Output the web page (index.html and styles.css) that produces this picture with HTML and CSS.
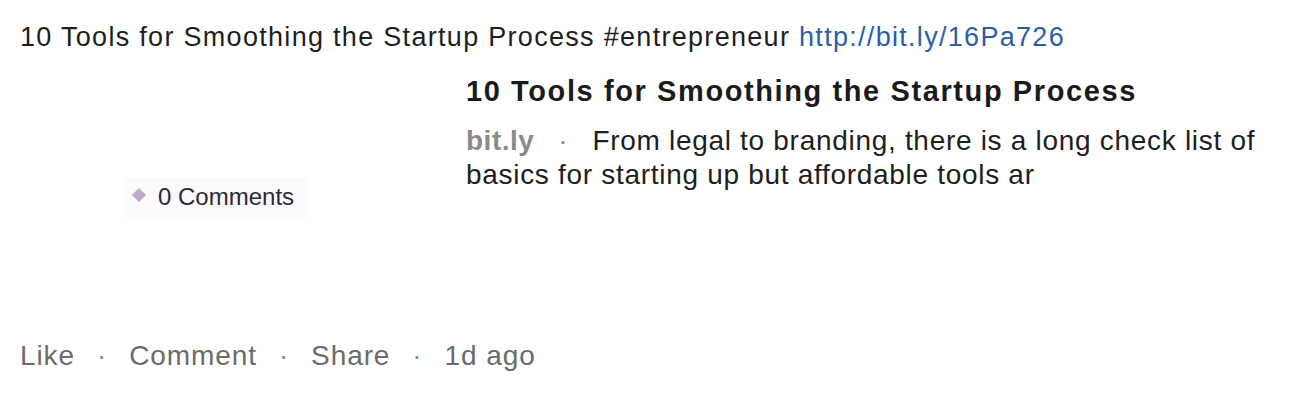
FILE: index.html
```html
<!DOCTYPE html>
<html lang="en">
  <head>
    <meta charset="UTF-8" />
    <title>Post</title>
    <link rel="stylesheet" href="styles.css">
  </head>
  <body>
    <div class="post">
      <p class="post-text">
        10 Tools for Smoothing the Startup Process #entrepreneur
        <a href="#" class="link">http://bit.ly/16Pa726</a>
      </p>
      <div class="share flex-row">
        <div class="thumb">
          <div class="thumb-label">
            <span class="diamond"></span>0 Comments
          </div>
        </div>
        <div class="share-body">
          <h3 class="share-title">10 Tools for Smoothing the Startup Process</h3>
          <p class="share-desc">
            <span class="source">bit.ly</span><span class="dot">·</span>From legal to branding, there is a long check list of basics for starting up but affordable tools ar
          </p>
        </div>
      </div>
      <div class="actions flex-row">
        <span>Like</span><span class="dot">·</span><span>Comment</span><span class="dot">·</span><span>Share</span><span class="dot">·</span><span>1d ago</span>
      </div>
    </div>
  </body>
</html>
```

FILE: styles.css
```css
body {
  margin: 0;
  background-color: #fff;
  font-family: "Liberation Sans", Arial, sans-serif;
  color: #222;
}
.post {
  padding: 19px 20px 0 20px;
}
.flex-row {
  display: flex;
}
.post-text {
  margin: 0;
  font-size: 27px;
  line-height: 36px;
  letter-spacing: 1.3px;
  color: #1e1e1e;
}
.link {
  color: #2b5ea8;
  text-decoration: none;
}
.share {
  margin-top: 19px;
}
.thumb {
  box-sizing: border-box;
  width: 446px;
  height: 200px;
  flex-shrink: 0;
  padding-top: 104px;
  padding-left: 104px;
}
.thumb-label {
  display: inline-block;
  padding: 4px 14px 6px 10px;
  font-size: 24px;
  line-height: 30px;
  color: #2e2838;
  background-color: #fbfafc;
}
.diamond {
  display: inline-block;
  width: 10px;
  height: 10px;
  margin-right: 14px;
  background-color: #bfaccb;
  transform: rotate(45deg);
  vertical-align: 5px;
}
.share-title {
  margin: 0;
  font-size: 29px;
  line-height: 34px;
  letter-spacing: 1.6px;
  font-weight: bold;
  color: #1b1b1b;
}
.share-desc {
  margin: 16px 0 0 0;
  font-size: 28px;
  line-height: 34px;
  letter-spacing: 0.7px;
  color: #1e1e1e;
}
.source {
  font-weight: bold;
  letter-spacing: 0.5px;
  color: #8a8a8a;
}
.dot {
  padding: 0 24px;
  color: #8a8a8a;
}
.actions {
  margin-top: 65px;
  font-size: 28px;
  line-height: 34px;
  letter-spacing: 0.9px;
  color: #6b6b6b;
}
.actions .dot {
  padding: 0 22px;
}
```
